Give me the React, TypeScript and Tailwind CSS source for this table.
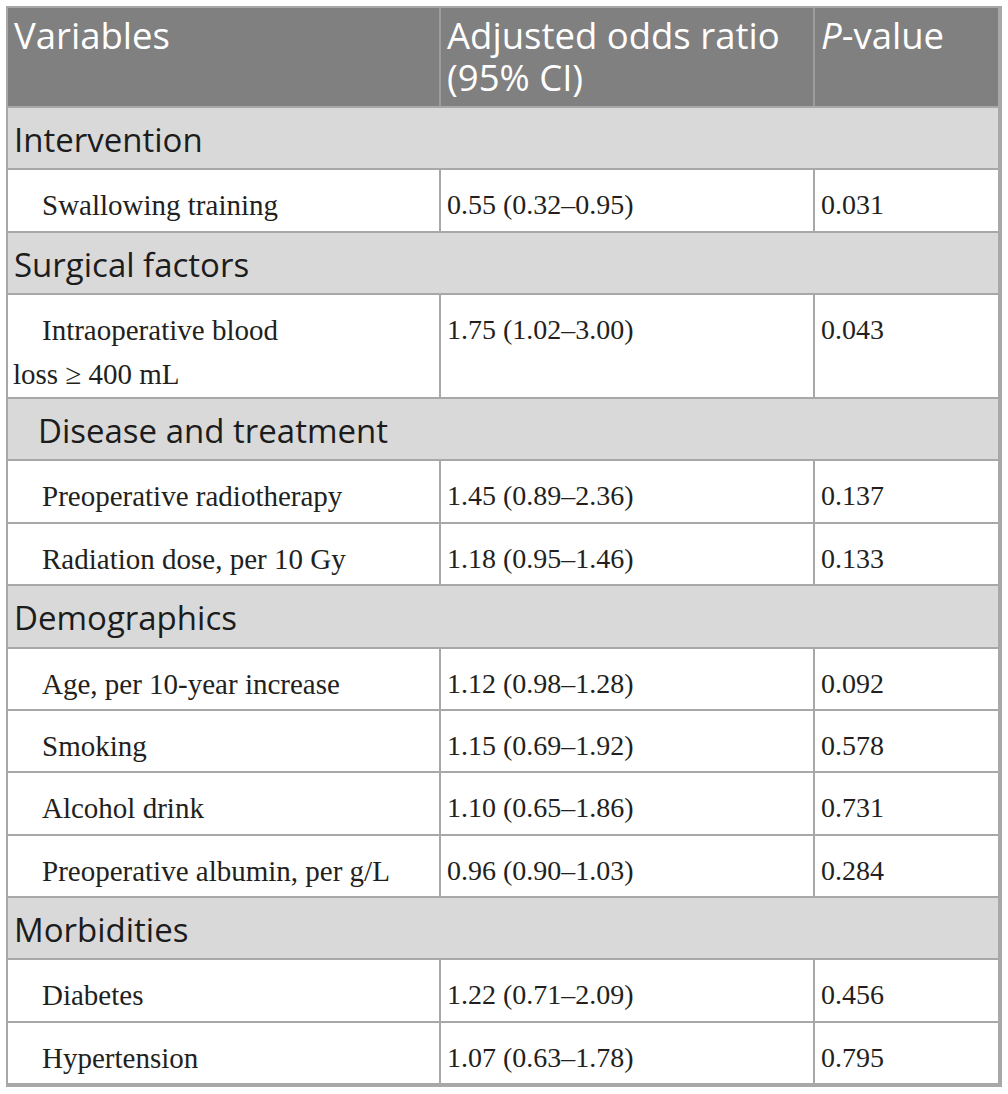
const SANS = "font-['Open_Sans','Liberation_Sans',sans-serif]";
const SERIF = "font-['Liberation_Serif','Times_New_Roman',serif]";

type Row =
  | { kind: "section"; label: string; indent?: boolean }
  | { kind: "item"; label: React.ReactNode; or: string; p: string; tall?: boolean };

const ROWS: Row[] = [
  { kind: "section", label: "Intervention" },
  { kind: "item", label: "Swallowing training", or: "0.55 (0.32–0.95)", p: "0.031" },
  { kind: "section", label: "Surgical factors" },
  {
    kind: "item",
    label: (
      <>
        Intraoperative blood
        <br />
        loss ≥ 400 mL
      </>
    ),
    or: "1.75 (1.02–3.00)",
    p: "0.043",
    tall: true,
  },
  { kind: "section", label: "Disease and treatment", indent: true },
  { kind: "item", label: "Preoperative radiotherapy", or: "1.45 (0.89–2.36)", p: "0.137" },
  { kind: "item", label: "Radiation dose, per 10 Gy", or: "1.18 (0.95–1.46)", p: "0.133" },
  { kind: "section", label: "Demographics" },
  { kind: "item", label: "Age, per 10-year increase", or: "1.12 (0.98–1.28)", p: "0.092" },
  { kind: "item", label: "Smoking", or: "1.15 (0.69–1.92)", p: "0.578" },
  { kind: "item", label: "Alcohol drink", or: "1.10 (0.65–1.86)", p: "0.731" },
  { kind: "item", label: "Preoperative albumin, per g/L", or: "0.96 (0.90–1.03)", p: "0.284" },
  { kind: "section", label: "Morbidities" },
  { kind: "item", label: "Diabetes", or: "1.22 (0.71–2.09)", p: "0.456" },
  { kind: "item", label: "Hypertension", or: "1.07 (0.63–1.78)", p: "0.795" },
];

export default function App() {
  return (
    <div className="min-h-[1094px] bg-white p-[6px]">
      <div className="w-[996px] border-t-2 border-l-2 border-r-4 border-b-2 border-[#a8a8a8]">
        {/* header */}
        <div className={`flex h-[100px] border-b-2 border-[#a8a8a8] bg-[#808080] text-white ${SANS} text-[36.5px] leading-[42px]`}>
          <div className="w-[433px] shrink-0 border-r-2 border-[#9c9c9c] pl-[6px] pt-[6px]">Variables</div>
          <div className="w-[374px] shrink-0 border-r-2 border-[#9c9c9c] pl-[6px] pt-[6px]">
            Adjusted odds ratio
            <br />
            (95% CI)
          </div>
          <div className="flex-1 pl-[6px] pt-[6px]">
            <span className="italic">P</span>-value
          </div>
        </div>

        {ROWS.map((r, i) =>
          r.kind === "section" ? (
            <div
              key={i}
              className={`flex h-[62.36px] items-center border-b-2 border-[#a8a8a8] bg-[#d9d9d9] pt-[3px] text-[#1c1c1c] ${SANS} text-[33px] ${
                r.indent ? "pl-[30px]" : "pl-[6px]"
              }`}
            >
              {r.label}
            </div>
          ) : (
            <div
              key={i}
              className={`flex border-b-2 border-[#a8a8a8] bg-white text-[#231f20] ${SERIF} text-[28px] leading-[44px] ${
                r.tall ? "h-[104px]" : "h-[62.36px]"
              }`}
            >
              <div className="w-[433px] shrink-0 border-r-2 border-[#a8a8a8] pl-[5px] pt-[13px] indent-[29px] text-[29px]">{r.label}</div>
              <div className="w-[374px] shrink-0 border-r-2 border-[#a8a8a8] pl-[6px] pt-[13px]">{r.or}</div>
              <div className="flex-1 pl-[6px] pt-[13px]">{r.p}</div>
            </div>
          ),
        )}
      </div>
    </div>
  );
}
